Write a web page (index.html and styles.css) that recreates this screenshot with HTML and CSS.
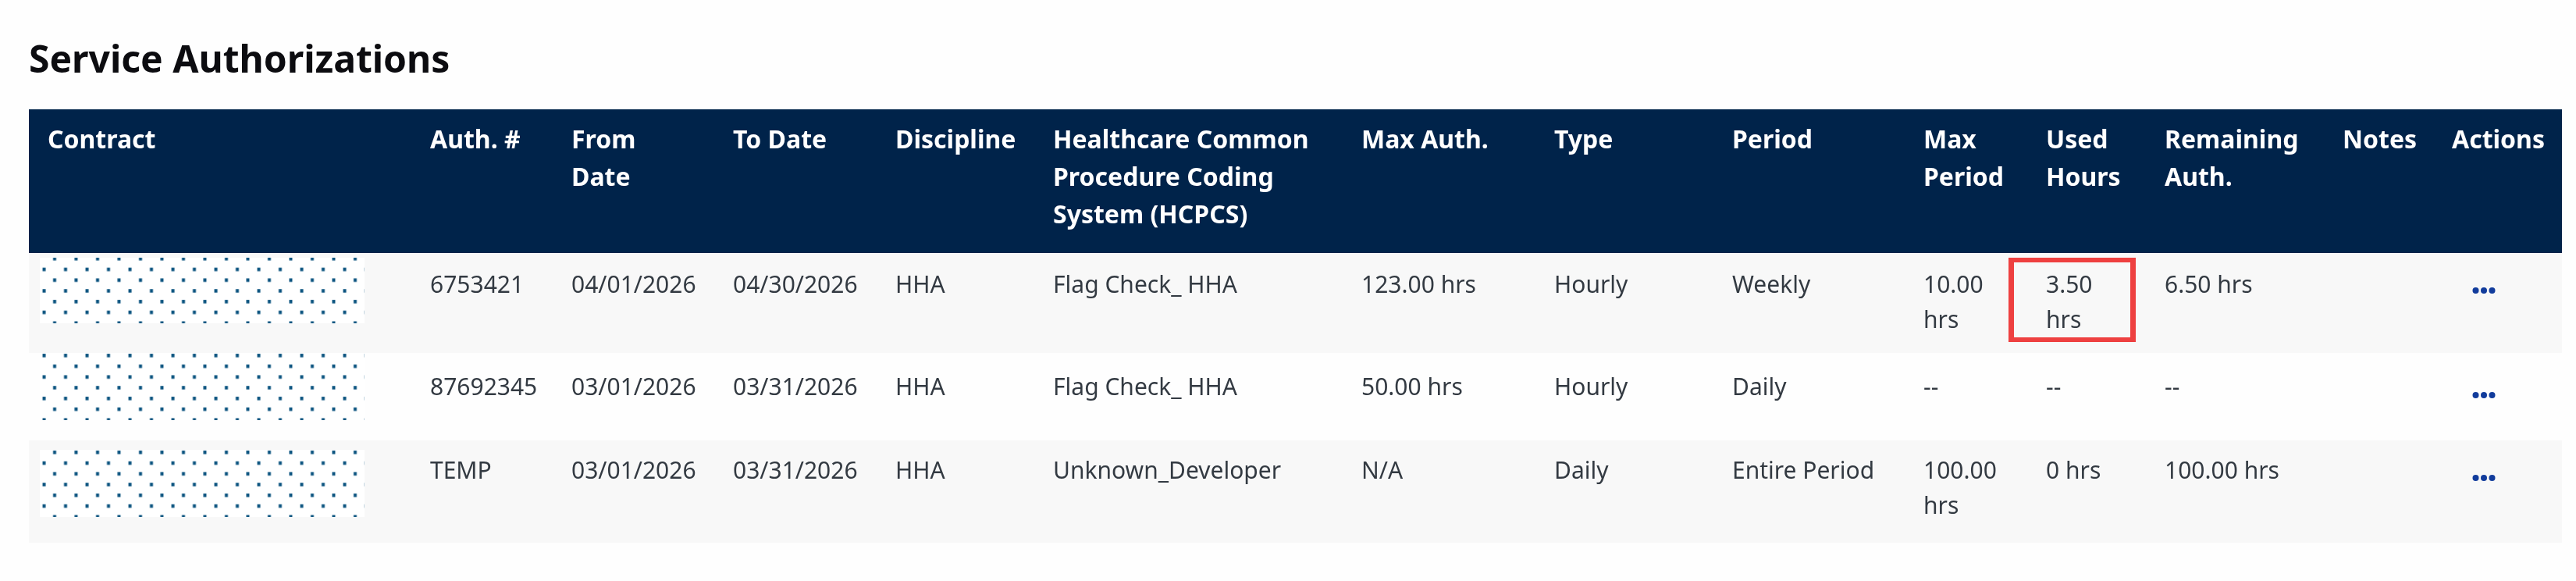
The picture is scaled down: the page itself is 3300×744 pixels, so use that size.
FILE: index.html
```html
<!DOCTYPE html>
<html lang="en">
<head>
<meta charset="utf-8">
<title>Service Authorizations</title>
<link rel="stylesheet" href="styles.css">
</head>
<body>
<main class="page">
  <h1 class="title">Service Authorizations</h1>
  <table class="auth-table">
    <colgroup>
      <col class="c-contract"><col class="c-auth"><col class="c-from"><col class="c-to"><col class="c-disc"><col class="c-hcpcs"><col class="c-max"><col class="c-type"><col class="c-period"><col class="c-maxp"><col class="c-used"><col class="c-rem"><col class="c-notes"><col class="c-actions">
    </colgroup>
    <thead>
      <tr>
        <th>Contract</th><th>Auth. #</th><th>From Date</th><th>To Date</th><th>Discipline</th>
        <th>Healthcare Common Procedure Coding System (HCPCS)</th><th>Max Auth.</th><th>Type</th><th>Period</th>
        <th>Max Period</th><th>Used Hours</th><th>Remaining Auth.</th><th>Notes</th><th>Actions</th>
      </tr>
    </thead>
    <tbody>
      <tr class="row-one">
        <td class="mask-cell">
          <svg class="mask mask-one" width="416" height="84" aria-hidden="true">
            <defs><pattern id="dots1" width="27.5" height="27.5" y="-6" patternUnits="userSpaceOnUse"><rect x="17" y="5" width="4" height="4.5"/><rect x="3.5" y="18.75" width="4" height="4.5"/></pattern></defs>
            <rect width="416" height="84" fill="url(#dots1)"/>
          </svg>
        </td>
        <td>6753421</td><td>04/01/2026</td><td>04/30/2026</td><td>HHA</td><td>Flag Check_ HHA</td><td>123.00 hrs</td><td>Hourly</td><td>Weekly</td>
        <td>10.00 hrs</td>
        <td class="flagged">3.50 hrs<span class="highlight"></span></td>
        <td>6.50 hrs</td><td></td>
        <td><svg class="more" viewBox="0 0 30 10" aria-label="More actions"><circle cx="4.5" cy="5" r="4"/><circle cx="15" cy="5" r="4"/><circle cx="25.5" cy="5" r="4"/></svg></td>
      </tr>
      <tr class="row-two">
        <td class="mask-cell">
          <svg class="mask mask-two" width="416" height="86" aria-hidden="true">
            <defs><pattern id="dots2" width="27.5" height="27.5" y="-17.75" patternUnits="userSpaceOnUse"><rect x="17" y="5" width="4" height="4.5"/><rect x="3.5" y="18.75" width="4" height="4.5"/></pattern></defs>
            <rect width="416" height="86" fill="url(#dots2)"/>
          </svg>
        </td>
        <td>87692345</td><td>03/01/2026</td><td>03/31/2026</td><td>HHA</td><td>Flag Check_ HHA</td><td>50.00 hrs</td><td>Hourly</td><td>Daily</td>
        <td>--</td><td>--</td><td>--</td><td></td>
        <td><svg class="more" viewBox="0 0 30 10" aria-label="More actions"><circle cx="4.5" cy="5" r="4"/><circle cx="15" cy="5" r="4"/><circle cx="25.5" cy="5" r="4"/></svg></td>
      </tr>
      <tr class="row-three">
        <td class="mask-cell">
          <svg class="mask mask-three" width="416" height="86" aria-hidden="true">
            <defs><pattern id="dots3" width="27.5" height="27.5" y="-4" patternUnits="userSpaceOnUse"><rect x="17" y="5" width="4" height="4.5"/><rect x="3.5" y="18.75" width="4" height="4.5"/></pattern></defs>
            <rect width="416" height="86" fill="url(#dots3)"/>
          </svg>
        </td>
        <td>TEMP</td><td>03/01/2026</td><td>03/31/2026</td><td>HHA</td><td>Unknown_Developer</td><td>N/A</td><td>Daily</td><td>Entire Period</td>
        <td>100.00 hrs</td><td>0 hrs</td><td>100.00 hrs</td><td></td>
        <td><svg class="more" viewBox="0 0 30 10" aria-label="More actions"><circle cx="4.5" cy="5" r="4"/><circle cx="15" cy="5" r="4"/><circle cx="25.5" cy="5" r="4"/></svg></td>
      </tr>
    </tbody>
  </table>
</main>
</body>
</html>
```
FILE: styles.css
```css
* { box-sizing: border-box; }
html, body { margin: 0; background: #fefefe; }
body { font-family: "Noto Sans", "Open Sans", sans-serif; color: #333a42; }
.page { width: 3300px; height: 744px; padding: 42px 18px 0 37px; overflow: hidden; filter: blur(0.5px); }
.title { margin: 0 0 33px; height: 65px; font-size: 48px; line-height: 65px; font-weight: 700; color: #0c0c10; }

.auth-table { width: 3245px; table-layout: fixed; border-collapse: collapse; }
.c-contract { width: 490px; } .c-auth { width: 181px; } .c-from { width: 207px; } .c-to { width: 208px; }
.c-disc { width: 202px; } .c-hcpcs { width: 395px; } .c-max { width: 247px; } .c-type { width: 228px; }
.c-period { width: 245px; } .c-maxp { width: 157px; } .c-used { width: 152px; } .c-rem { width: 228px; }
.c-notes { width: 140px; } .c-actions { width: 165px; }

thead tr { height: 184px; background: #00234a; }
th { padding: 14px 24px 0; vertical-align: top; text-align: left; color: #fff; font-size: 32px; line-height: 48px; font-weight: 700; }
td { padding: 0 24px; vertical-align: top; font-size: 30px; line-height: 45px; font-weight: 400; }

.row-one { height: 128px; background: #f8f8f8; }
.row-one td { padding-top: 17px; }
.row-two { height: 112px; background: #fefefe; }
.row-two td { padding-top: 20px; }
.row-three { height: 131px; background: #f8f8f8; }
.row-three td { padding-top: 15px; }

td.mask-cell { padding: 0 0 0 14px; }
.mask { display: block; background: #fff; fill: #0c5480; }
.mask-one { margin-top: 6px; }
.mask-three { margin-top: 12px; }

.flagged { position: relative; }
.highlight { position: absolute; left: -24px; top: 6px; width: 163px; height: 108px; border-style: solid; border-color: #ee4040; border-width: 6px 7px; }

.more { display: block; width: 30px; height: 10px; margin-left: 26px; fill: #123c9c; }
.row-one .more { margin-top: 26px; }
.row-two .more { margin-top: 29px; }
.row-three .more { margin-top: 28px; }
```
